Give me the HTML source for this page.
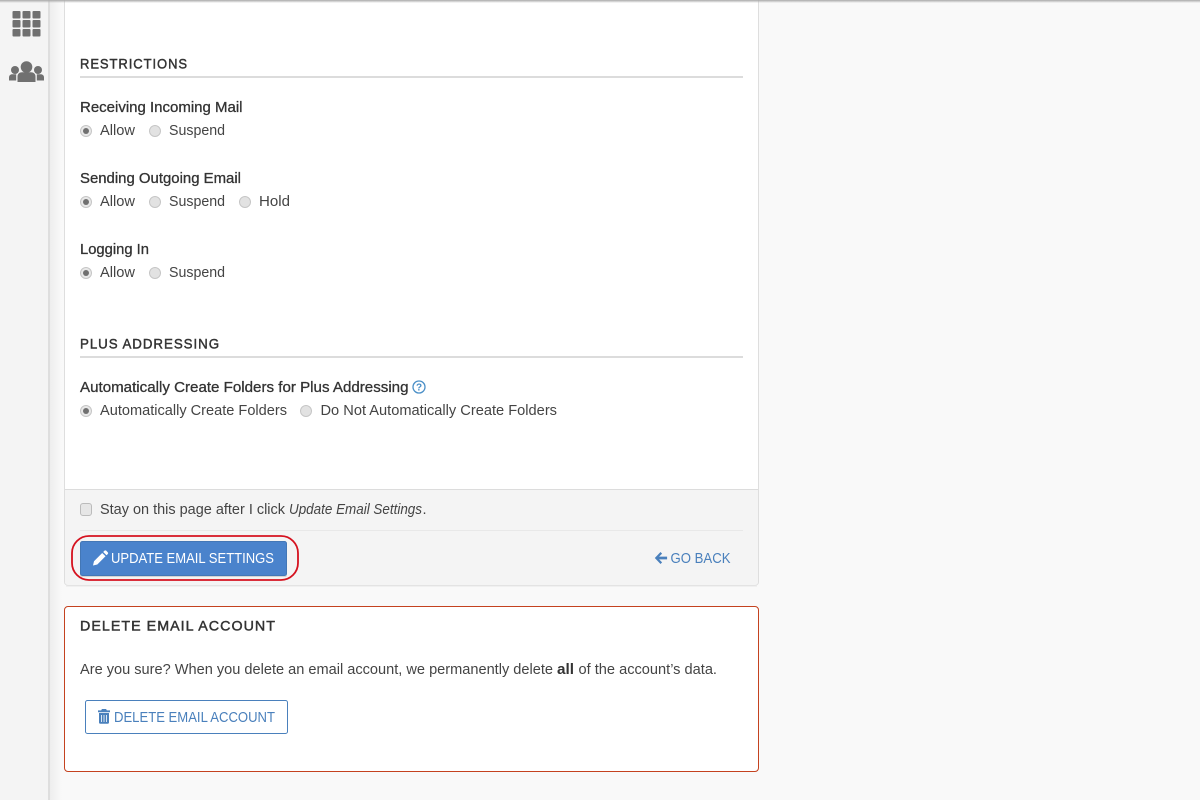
<!DOCTYPE html>
<html><head><meta charset="utf-8"><title>Email Settings</title>
<style>
html,body{margin:0;padding:0;width:1200px;height:800px;overflow:hidden;background:#f9f9f9}
svg{display:block}
text{font-family:"Liberation Sans",sans-serif;font-size:14.5px;fill:#444}
.h{font-size:14px;font-weight:normal;fill:#333;stroke:#333;stroke-width:.45px}
.l{fill:#333;stroke:#333;stroke-width:.3px}
.b{fill:#4a80bc;font-size:15px}
</style></head><body>
<svg width="1200" height="800" viewBox="0 0 1200 800" xmlns="http://www.w3.org/2000/svg">
<defs>
<linearGradient id="sg" x1="0" x2="1" y1="0" y2="0"><stop offset="0" stop-color="#eeeeee"/><stop offset="1" stop-color="#f9f9f9"/></linearGradient>
<linearGradient id="tg" x1="0" x2="0" y1="0" y2="1"><stop offset="0" stop-color="#aaa"/><stop offset="1" stop-color="#aaa" stop-opacity="0"/></linearGradient>
<g id="r"><circle r="5.5" fill="#e2e2e2" stroke="#c6c6c6"/></g>
<g id="rc"><circle r="5.5" fill="#e8e8e8" stroke="#c6c6c6"/><circle r="3" fill="#707070"/></g>
</defs>
<rect width="1200" height="800" fill="#f9f9f9"/>
<!-- sidebar -->
<rect width="48" height="800" fill="#f4f4f4"/>
<rect x="48" width="2" height="800" fill="#dedede"/>
<rect x="50" width="12" height="800" fill="url(#sg)"/>
<g fill="#707070">
<rect x="12.500" y="11" width="8" height="7.500" rx="1"/><rect x="22.500" y="11" width="8" height="7.500" rx="1"/><rect x="32.500" y="11" width="8" height="7.500" rx="1"/>
<rect x="12.500" y="20" width="8" height="7.500" rx="1"/><rect x="22.500" y="20" width="8" height="7.500" rx="1"/><rect x="32.500" y="20" width="8" height="7.500" rx="1"/>
<rect x="12.500" y="29" width="8" height="7.500" rx="1"/><rect x="22.500" y="29" width="8" height="7.500" rx="1"/><rect x="32.500" y="29" width="8" height="7.500" rx="1"/>
<circle cx="26.500" cy="67" r="5.800"/><circle cx="15" cy="70" r="4"/><circle cx="38" cy="70" r="4"/>
<path d="M17.500 82v-5.500c0-2.800 2-4.300 4.500-4.300h9c2.500 0 4.500 1.500 4.500 4.300V82z"/>
<path d="M9 80.500v-3c0-2 1.500-3.200 3.200-3.200h4v6.200z"/><path d="M44 80.500v-3c0-2-1.500-3.200-3.200-3.200h-4v6.200z"/>
</g>
<!-- main card -->
<rect x="64.500" y="-5" width="694" height="590" rx="3" fill="#fff" stroke="#dedede"/>
<path d="M65 489.500H758" stroke="#dcdcdc"/>
<path d="M65 490H758V582a3 3 0 0 1-3 3H68a3 3 0 0 1-3-3z" fill="#f4f4f4"/>
<path d="M80 530.500H743" stroke="#e8e8e8"/>
<path d="M66 586H757" stroke="#e8e8e8"/>
<!-- restrictions -->
<text class="h" x="80" y="68.500" textLength="108" lengthAdjust="spacingAndGlyphs" style="letter-spacing:1px">RESTRICTIONS</text>
<rect x="80" y="76" width="663" height="2" fill="#dcdcdc"/>
<text class="l" x="80" y="112" textLength="162.500" lengthAdjust="spacingAndGlyphs">Receiving Incoming Mail</text>
<use href="#rc" x="86" y="131"/><text x="100" y="135" textLength="35" lengthAdjust="spacingAndGlyphs">Allow</text>
<use href="#r" x="155" y="131"/><text x="169" y="135" textLength="56" lengthAdjust="spacingAndGlyphs">Suspend</text>
<text class="l" x="80" y="183" textLength="161" lengthAdjust="spacingAndGlyphs">Sending Outgoing Email</text>
<use href="#rc" x="86" y="202"/><text x="100" y="206" textLength="35" lengthAdjust="spacingAndGlyphs">Allow</text>
<use href="#r" x="155" y="202"/><text x="169" y="206" textLength="56" lengthAdjust="spacingAndGlyphs">Suspend</text>
<use href="#r" x="245" y="202"/><text x="259" y="206" textLength="31" lengthAdjust="spacingAndGlyphs">Hold</text>
<text class="l" x="80" y="254" textLength="69" lengthAdjust="spacingAndGlyphs">Logging In</text>
<use href="#rc" x="86" y="273"/><text x="100" y="277" textLength="35" lengthAdjust="spacingAndGlyphs">Allow</text>
<use href="#r" x="155" y="273"/><text x="169" y="277" textLength="56" lengthAdjust="spacingAndGlyphs">Suspend</text>
<!-- plus addressing -->
<text class="h" x="80" y="348.500" textLength="140" lengthAdjust="spacingAndGlyphs" style="letter-spacing:1px">PLUS ADDRESSING</text>
<rect x="80" y="356" width="663" height="2" fill="#dcdcdc"/>
<text class="l" x="80" y="392" textLength="328.500" lengthAdjust="spacingAndGlyphs">Automatically Create Folders for Plus Addressing</text>
<circle cx="419" cy="387" r="6" fill="none" stroke="#4a8fc7" stroke-width="1.300"/>
<text x="419" y="390.500" text-anchor="middle" style="font-size:10px;font-weight:bold;fill:#4a8fc7">?</text>
<use href="#rc" x="86" y="411"/><text x="100" y="415" textLength="187" lengthAdjust="spacingAndGlyphs">Automatically Create Folders</text>
<use href="#r" x="306" y="411"/><text x="320.500" y="415" textLength="236.500" lengthAdjust="spacingAndGlyphs">Do Not Automatically Create Folders</text>
<!-- footer -->
<rect x="80.500" y="503.500" width="11" height="12" rx="2.500" fill="#e6e6e6" stroke="#bbb"/>
<text x="100" y="514" textLength="185" lengthAdjust="spacingAndGlyphs">Stay on this page after I click</text>
<text x="289" y="514" textLength="133" lengthAdjust="spacingAndGlyphs" font-style="italic">Update Email Settings</text>
<text x="422.500" y="514">.</text>
<rect x="72" y="536" width="226" height="44" rx="17" fill="none" stroke="#d5121f" stroke-width="1.800"/>
<rect x="80" y="542" width="207" height="35" rx="2" fill="#d4d4d4"/>
<rect x="80.500" y="541.500" width="206" height="34" rx="2" fill="#4a83cc" stroke="#4377b6"/>
<path d="M93 565.500l1-4.300 8.200-8.200 3.300 3.300-8.200 8.200zM103.200 552l1.200-1.200c.6-.6 1.300-.6 1.900 0l1.400 1.400c.6.600.6 1.300 0 1.900l-1.200 1.200z" fill="#fff"/>
<text x="111" y="563" textLength="163" lengthAdjust="spacingAndGlyphs" style="fill:#fff;font-size:15px">UPDATE EMAIL SETTINGS</text>
<path d="M660.500 552l-5.700 6 5.700 6 1.600-1.600-3-3h8v-2.800h-8l3-3z" fill="#4a80bc"/>
<text class="b" x="670.500" y="563" textLength="60" lengthAdjust="spacingAndGlyphs">GO BACK</text>
<!-- delete -->
<rect x="64.500" y="606.500" width="694" height="165" rx="3.500" fill="#fff" stroke="#c4421f"/>
<text class="h" x="80" y="630.500" textLength="196" lengthAdjust="spacingAndGlyphs" style="letter-spacing:1px">DELETE EMAIL ACCOUNT</text>
<text x="80" y="674" textLength="473" lengthAdjust="spacingAndGlyphs">Are you sure? When you delete an email account, we permanently delete</text>
<text x="557" y="674" textLength="17" lengthAdjust="spacingAndGlyphs" style="font-weight:bold;fill:#333">all</text>
<text x="578.500" y="674" textLength="138.500" lengthAdjust="spacingAndGlyphs">of the account’s data.</text>
<rect x="85.500" y="700.500" width="202" height="33" rx="2" fill="#fff" stroke="#4a80bc"/>
<path d="M98 712.200h12v-1.800h-3.200l-.7-1.400h-4.200l-.7 1.400H98zM99 713v9.400c0 .9.500 1.400 1.300 1.400h7.400c.8 0 1.300-.5 1.300-1.400V713zm2.200 2h.8v7h-.8zm2.400 0h.8v7h-.8zm2.400 0h.8v7h-.8z" fill="#4a80bc" fill-rule="evenodd"/>
<text class="b" x="114" y="722" textLength="161" lengthAdjust="spacingAndGlyphs">DELETE EMAIL ACCOUNT</text>
<!-- top shadow -->
<rect width="1200" height="3" fill="url(#tg)"/>
</svg>
</body></html>
